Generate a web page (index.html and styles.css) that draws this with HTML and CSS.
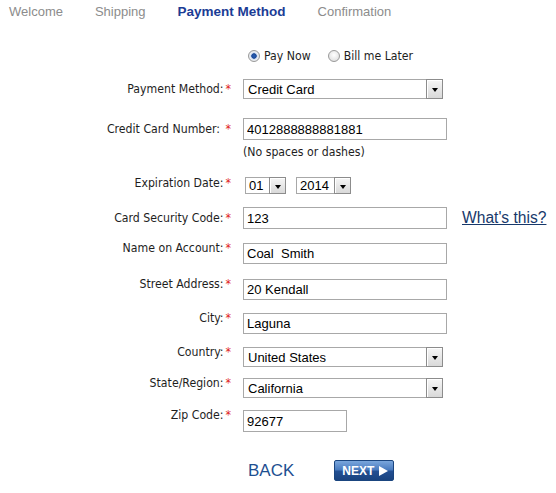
FILE: index.html
```html
<!DOCTYPE html>
<html>
<head>
<meta charset="utf-8">
<title>Payment Method</title>
<link rel="stylesheet" href="styles.css">
</head>
<body>
<nav class="steps">
  <span class="step">Welcome</span>
  <span class="step">Shipping</span>
  <span class="step active">Payment Method</span>
  <span class="step">Confirmation</span>
</nav>

<form class="form">
  <div class="lbl"></div>
  <div class="field radios">
    <label class="radio"><input type="radio" name="when" checked> Pay Now</label>
    <label class="radio"><input type="radio" name="when"> Bill me Later</label>
  </div>

  <div class="lbl lbl-sel">Payment Method:<span class="req">*</span></div>
  <div class="field"><span class="sel"><select class="select s-wide"><option>Credit Card</option></select></span></div>

  <div class="lbl lbl-in">Credit Card Number: <span class="req">*</span></div>
  <div class="field">
    <input class="input i-wide" type="text" value="4012888888881881">
    <div class="hint">(No spaces or dashes)</div>
  </div>

  <div class="lbl lbl-exp">Expiration Date:<span class="req">*</span></div>
  <div class="field exp">
    <span class="sel sel-sm"><select class="select s-month"><option>01</option></select></span>
    <span class="sel sel-sm"><select class="select s-year"><option>2014</option></select></span>
  </div>

  <div class="lbl lbl-in">Card Security Code:<span class="req">*</span></div>
  <div class="field inline">
    <input class="input i-wide" type="text" value="123">
    <a class="help" href="#">What's this?</a>
  </div>

  <div class="lbl lbl-top">Name on Account:<span class="req">*</span></div>
  <div class="field"><input class="input i-wide i-sm" type="text" value="Coal  Smith"></div>

  <div class="lbl lbl-top">Street Address:<span class="req">*</span></div>
  <div class="field"><input class="input i-wide i-sm" type="text" value="20 Kendall"></div>

  <div class="lbl lbl-top">City:<span class="req">*</span></div>
  <div class="field"><input class="input i-wide i-sm" type="text" value="Laguna"></div>

  <div class="lbl lbl-top">Country:<span class="req">*</span></div>
  <div class="field"><span class="sel"><select class="select s-wide"><option>United States</option></select></span></div>

  <div class="lbl lbl-top">State/Region:<span class="req">*</span></div>
  <div class="field"><span class="sel"><select class="select s-wide"><option>California</option></select></span></div>

  <div class="lbl lbl-top">Zip Code:<span class="req">*</span></div>
  <div class="field"><input class="input i-zip" type="text" value="92677"></div>

  <div class="lbl"></div>
  <div class="field actions">
    <a class="back" href="#">BACK</a>
    <button class="next" type="button">NEXT <span class="tri"></span></button>
  </div>
</form>
</body>
</html>
```

FILE: styles.css
```css
html, body {
  margin: 0;
  padding: 0;
  background: #ffffff;
}

body {
  width: 556px;
  height: 493px;
  overflow: hidden;
  font-family: "DejaVu Sans Condensed", "DejaVu Sans", sans-serif;
  font-stretch: condensed;
  font-size: 12.2px;
  color: #1e1e1e;
}

.steps {
  display: flex;
  gap: 32px;
  padding-left: 9px;
  height: 24px;
  line-height: 24px;
  font-family: "Liberation Sans", Arial, sans-serif;
  font-stretch: normal;
  font-size: 13px;
  color: #8c8c8c;
}

.step.active {
  color: #1b3c95;
  font-weight: bold;
  font-size: 13.5px;
}

.form {
  display: grid;
  grid-template-columns: 231px 1fr;
  grid-template-rows: 31px 39px 59px 30px 36px 36px 34px 34px 31px 32px 50px 21px;
  margin-top: 24px;
  align-items: start;
}

.lbl {
  text-align: right;
  line-height: 14px;
  white-space: nowrap;
}

.lbl-sel { margin-top: 3px; }
.lbl-in { margin-top: 4px; }
.lbl-exp { margin-top: -1px; }
.lbl-top { margin-top: -2px; }

.req {
  color: #e02020;
  margin-left: 2px;
}

.field {
  padding-left: 12px;
}

.radios {
  display: flex;
  align-items: center;
  gap: 17px;
  padding-left: 17px;
  height: 14px;
  margin-top: 1px;
}

.radio {
  display: flex;
  align-items: center;
  gap: 4px;
  line-height: 14px;
}

.radio input {
  appearance: none;
  -webkit-appearance: none;
  margin: 0;
  width: 12px;
  height: 12px;
  border-radius: 50%;
  border: 1px solid #9a9a9a;
  background: radial-gradient(circle at 50% 40%, #ffffff 0, #e4e4e4 70%, #c8c8c8 100%);
}

.radio input:checked {
  background: radial-gradient(circle at 50% 50%, #2a5fb5 0, #1d4a98 2.4px, #c4d2e8 3px, #eef1f6 4px, #d0d0d0 100%);
}

.input {
  box-sizing: border-box;
  height: 22px;
  border: 1px solid #a8a8a8;
  padding: 0 3px;
  margin: 0;
  font-family: "Liberation Sans", Arial, sans-serif;
  font-stretch: normal;
  font-size: 13px;
  color: #000000;
  background: #ffffff;
  outline: none;
}

.i-wide { width: 204px; }
.i-sm { height: 21px; }
.i-zip { width: 104px; }

.hint {
  margin-top: 5px;
  line-height: 14px;
}

.inline {
  display: flex;
  align-items: center;
  gap: 15px;
}

.help {
  font-family: "Liberation Sans", Arial, sans-serif;
  font-stretch: normal;
  font-size: 15.6px;
  color: #17386a;
  text-decoration: underline;
  white-space: nowrap;
}

.sel {
  position: relative;
  display: inline-block;
  vertical-align: top;
}

.select {
  appearance: none;
  -webkit-appearance: none;
  box-sizing: border-box;
  display: block;
  height: 20px;
  margin: 0;
  border: 1px solid #a8a8a8;
  border-radius: 0;
  padding: 0 0 0 4px;
  font-family: "Liberation Sans", Arial, sans-serif;
  font-stretch: normal;
  font-size: 13px;
  color: #000000;
  background: #ffffff;
  outline: none;
}

.s-wide { width: 200px; }
.s-month { width: 41px; }
.s-year { width: 55px; }

.sel::after {
  content: "";
  position: absolute;
  top: 0;
  right: 0;
  bottom: 0;
  width: 15px;
  border: 1px solid #8c8c8c;
  box-shadow: inset 1px 1px 0 #ffffff;
  background: linear-gradient(#f6f6f6, #d9d9d9);
  pointer-events: none;
}

.sel::before {
  content: "";
  position: absolute;
  right: 5px;
  top: 50%;
  margin-top: -1px;
  border-left: 3.5px solid transparent;
  border-right: 3.5px solid transparent;
  border-top: 4px solid #000000;
  z-index: 1;
  pointer-events: none;
}

.sel-sm .select {
  height: 17px;
  font-size: 13px;
  line-height: 15px;
  padding-left: 3px;
}

.exp {
  display: flex;
  gap: 10px;
  padding-left: 14px;
}

.actions {
  display: flex;
  align-items: center;
  gap: 40px;
  padding-left: 17px;
  height: 21px;
}

.back {
  font-family: "Liberation Sans", Arial, sans-serif;
  font-stretch: normal;
  font-size: 17px;
  color: #1e4f91;
  text-decoration: none;
}

.next {
  display: flex;
  align-items: center;
  justify-content: center;
  gap: 5px;
  width: 60px;
  height: 21px;
  padding: 0 0 0 2px;
  border: 1px solid #1a457f;
  border-radius: 2px;
  background: linear-gradient(#7aa6dc 0, #4a7cc0 45%, #234f92 55%, #1a437f 100%);
  font-family: "Liberation Sans", Arial, sans-serif;
  font-stretch: normal;
  font-weight: bold;
  font-size: 12px;
  color: #ffffff;
  cursor: pointer;
}

.tri {
  width: 0;
  height: 0;
  border-top: 5px solid transparent;
  border-bottom: 5px solid transparent;
  border-left: 9px solid #ffffff;
}
```
